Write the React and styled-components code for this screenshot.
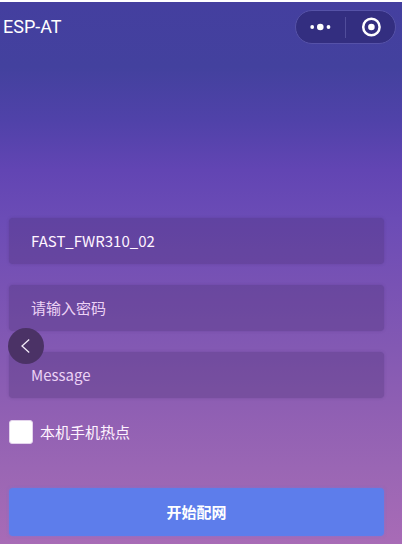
import React, { useState } from "react";
import styled, { createGlobalStyle } from "styled-components";

const GlobalStyle = createGlobalStyle`
  * { box-sizing: border-box; }
  body {
    margin: 0;
    background: #fff;
    font-family: "Noto Sans CJK SC", "Noto Sans", sans-serif;
  }
`;

const Screen = styled.main`
  position: relative;
  margin: 2px 1px 0 0;
  min-height: calc(100vh - 2px);
  background: linear-gradient(
    180deg,
    #443f9f 0%,
    #43419e 12%,
    #5042a9 22%,
    #6245b3 31%,
    #6b4cb6 40%,
    #7852b4 52%,
    #8359b3 64%,
    #8f5fb3 75%,
    #9a66b4 86%,
    #a86bb6 100%
  );
`;

const TitleBar = styled.header`
  display: flex;
  align-items: center;
  justify-content: space-between;
  padding: 7px 6px 0 3px;
`;

const Title = styled.h1`
  margin: 0;
  color: #fff;
  font: 400 18px/36px Roboto, sans-serif;
`;

const Capsule = styled.div`
  display: flex;
  align-items: center;
  width: 101px;
  height: 34px;
  border: 1px solid #5652a8;
  border-radius: 17px;
  background: #332e80;
`;

const CapsuleButton = styled.button`
  display: flex;
  flex: 1;
  align-items: center;
  justify-content: center;
  height: 100%;
  padding: 0;
  border: 0;
  background: none;
  color: #fff;
`;

const Divider = styled.span`
  width: 1px;
  height: 21px;
  background: #514d9b;
`;

const Form = styled.form`
  display: flex;
  flex-direction: column;
  padding: 173px 18px 8px 9px;
`;

const Fields = styled.div`
  display: flex;
  flex-direction: column;
  gap: 21px;
`;

const Field = styled.input`
  width: 100%;
  height: 46px;
  padding: 0 22px 2px;
  border: 0;
  border-radius: 4px;
  outline: 0;
  background: rgba(72, 48, 112, 0.3);
  box-shadow: 0 0 3px rgba(72, 48, 112, 0.3);
  color: #fff4ff;
  font: 400 15px/24px "Noto Sans CJK SC", sans-serif;

  &::placeholder {
    color: #ecd2f5;
    opacity: 1;
  }
`;

const CheckRow = styled.label`
  display: flex;
  align-items: center;
  align-self: flex-start;
  gap: 7px;
  margin-top: 22px;
  color: #fff4ff;
  font-size: 15px;
  line-height: 24px;
`;

const Checkbox = styled.input`
  appearance: none;
  width: 24px;
  height: 24px;
  margin: 0;
  border: 1px solid #e3d3ec;
  border-radius: 3px;
  background: #fff;

  &:checked {
    box-shadow: inset 0 0 0 5px #fff;
    background: #5d7deb;
  }
`;

const SubmitButton = styled.button`
  height: 48px;
  margin-top: 44px;
  border: 0;
  border-radius: 4px;
  background: #5d7deb;
  box-shadow: 0 0 3px rgba(93, 125, 235, 0.5);
  color: #fff;
  font: 700 15px/24px "Noto Sans CJK SC", sans-serif;
`;

const BackButton = styled.button`
  position: absolute;
  top: 326px;
  left: 8px;
  display: flex;
  align-items: center;
  justify-content: center;
  width: 36px;
  height: 36px;
  padding: 0;
  border: 0;
  border-radius: 50%;
  background: #4b3266;
  color: #f3eaf8;
`;

function MoreIcon() {
  return (
    <svg width="22" height="8" viewBox="0 0 22 8" fill="currentColor" aria-hidden="true">
      <circle cx="2.2" cy="4" r="1.9" />
      <circle cx="10.3" cy="4" r="3.3" />
      <circle cx="18.5" cy="4" r="1.9" />
    </svg>
  );
}

function CloseIcon() {
  return (
    <svg width="20" height="20" viewBox="0 0 20 20" aria-hidden="true">
      <circle cx="10.4" cy="10" r="8.2" fill="none" stroke="currentColor" strokeWidth="2.5" />
      <circle cx="10.4" cy="10" r="3.3" fill="currentColor" />
    </svg>
  );
}

function BackIcon() {
  return (
    <svg width="10" height="16" viewBox="0 0 10 16" aria-hidden="true">
      <path d="M8.2 1.5 1 8l7.2 6.5" fill="none" stroke="currentColor" strokeWidth="1.3" />
    </svg>
  );
}

export default function App() {
  const [ssid, setSsid] = useState("FAST_FWR310_02");
  const [hotspot, setHotspot] = useState(false);

  return (
    <>
      <GlobalStyle />
      <Screen>
        <TitleBar>
          <Title>ESP-AT</Title>
          <Capsule>
            <CapsuleButton type="button" aria-label="更多">
              <MoreIcon />
            </CapsuleButton>
            <Divider />
            <CapsuleButton type="button" aria-label="关闭">
              <CloseIcon />
            </CapsuleButton>
          </Capsule>
        </TitleBar>
        <Form onSubmit={(e) => e.preventDefault()}>
          <Fields>
            <Field
              aria-label="SSID"
              value={ssid}
              onChange={(e) => setSsid(e.target.value)}
            />
            <Field type="password" aria-label="密码" placeholder="请输入密码" />
            <Field aria-label="Message" placeholder="Message" />
          </Fields>
          <CheckRow>
            <Checkbox
              type="checkbox"
              checked={hotspot}
              onChange={(e) => setHotspot(e.target.checked)}
            />
            本机手机热点
          </CheckRow>
          <SubmitButton type="submit">开始配网</SubmitButton>
        </Form>
        <BackButton type="button" aria-label="返回">
          <BackIcon />
        </BackButton>
      </Screen>
    </>
  );
}
